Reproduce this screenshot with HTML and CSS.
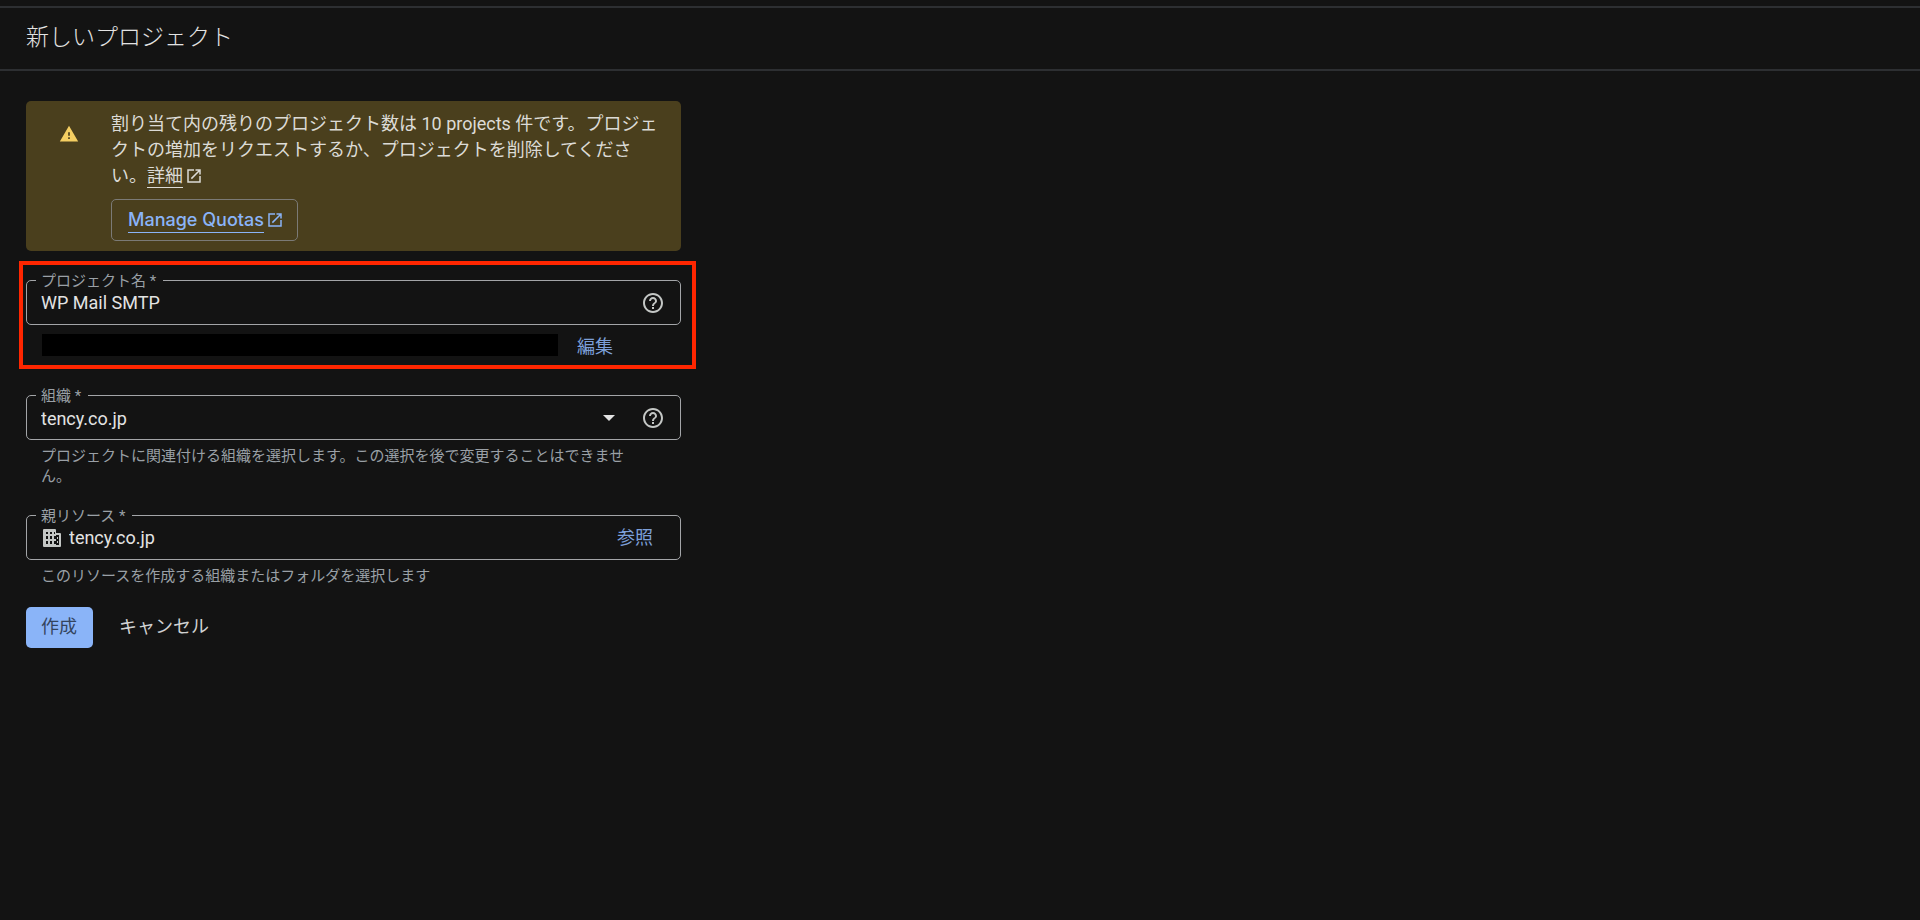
FILE: index.html
```html
<!DOCTYPE html>
<html lang="ja">
<head>
  <meta charset="UTF-8" />
  <meta name="viewport" content="width=device-width, initial-scale=1.0"/>
  <title>新しいプロジェクト</title>
  <link rel="stylesheet" href="styles.css">
</head>
<body>
  <header class="page-header">
    <h1>新しいプロジェクト</h1>
  </header>

  <main class="content">
    <form class="project-form">
      <div class="alert">
        <svg class="alert-icon" viewBox="0 0 24 24"><path d="M1 21h22L12 2 1 21zm12-3h-2v-2h2v2zm0-4h-2v-4h2v4z"/></svg>
        <div class="alert-body">
          <p>割り当て内の残りのプロジェクト数は 10 projects 件です。プロジェクトの増加をリクエストするか、プロジェクトを削除してください。<a class="details-link" href="#">詳細</a><svg class="external-icon" viewBox="0 0 24 24"><path d="M19 19H5V5h7V3H3v18h18v-9h-2v7zM14 3v2h3.600l-9.800 9.800 1.400 1.400L19 6.400V10h2V3h-7z"/></svg></p>
          <a class="quota-button" href="#"><span class="quota-text">Manage Quotas</span><svg class="external-icon" viewBox="0 0 24 24"><path d="M19 19H5V5h7V3H3v18h18v-9h-2v7zM14 3v2h3.600l-9.800 9.800 1.400 1.400L19 6.400V10h2V3h-7z"/></svg></a>
        </div>
      </div>

      <div class="highlight">
        <fieldset class="field">
          <legend><label for="project-name">プロジェクト名 *</label></legend>
          <div class="field-row">
            <input id="project-name" type="text" value="WP Mail SMTP">
            <button class="icon-button" type="button" title="ヘルプ">
              <svg viewBox="0 0 24 24"><path d="M11 18h2v-2h-2v2zm1-16C6.480 2 2 6.480 2 12s4.480 10 10 10 10-4.480 10-10S17.520 2 12 2zm0 18c-4.410 0-8-3.590-8-8s3.590-8 8-8 8 3.590 8 8-3.590 8-8 8zm0-14c-2.210 0-4 1.790-4 4h2c0-1.100.9-2 2-2s2 .9 2 2c0 2-3 1.750-3 5h2c0-2.250 3-2.500 3-5 0-2.210-1.790-4-4-4z"/></svg>
            </button>
          </div>
        </fieldset>
        <div class="project-id">
          <span class="redacted"></span>
          <button class="text-button" type="button">編集</button>
        </div>
      </div>

      <fieldset class="field">
        <legend><label for="organization">組織 *</label></legend>
        <div class="field-row">
          <select id="organization">
            <option>tency.co.jp</option>
          </select>
          <svg class="caret" viewBox="0 0 12 6"><path d="M0 0h12L6 6z"/></svg>
          <button class="icon-button" type="button" title="ヘルプ">
            <svg viewBox="0 0 24 24"><path d="M11 18h2v-2h-2v2zm1-16C6.480 2 2 6.480 2 12s4.480 10 10 10 10-4.480 10-10S17.520 2 12 2zm0 18c-4.410 0-8-3.590-8-8s3.590-8 8-8 8 3.590 8 8-3.590 8-8 8zm0-14c-2.210 0-4 1.790-4 4h2c0-1.100.9-2 2-2s2 .9 2 2c0 2-3 1.750-3 5h2c0-2.250 3-2.500 3-5 0-2.210-1.790-4-4-4z"/></svg>
          </button>
        </div>
      </fieldset>
      <p class="hint">プロジェクトに関連付ける組織を選択します。この選択を後で変更することはできません。</p>

      <fieldset class="field">
        <legend><label for="parent">親リソース *</label></legend>
        <div class="field-row">
          <svg class="org-icon" viewBox="0 0 18 18"><path fill-rule="evenodd" d="M1 0h11q1 0 1 1v3h4q1 0 1 1v12q0 1-1 1H1q-1 0-1-1V1q0-1 1-1zM3 3v2h2V3zM7 3v2h2V3zM3 7v3h2V7zM7 7v3h2V7zM3 12v3h2v-3zM7 12v3h2v-3zM11 3v2h1V3zM11 7v3h2v2h-2v3h2v1h3V6h-3v1zM14 8h1v2h-1zM14 12h1v2h-1z"/></svg>
          <input id="parent" type="text" value="tency.co.jp">
          <button class="text-button" type="button">参照</button>
        </div>
      </fieldset>
      <p class="hint">このリソースを作成する組織またはフォルダを選択します</p>

      <div class="actions">
        <button class="create-button" type="submit">作成</button>
        <button class="cancel-button" type="button">キャンセル</button>
      </div>
    </form>
  </main>
</body>
</html>
```
FILE: styles.css
```css
* {
  box-sizing: border-box;
}
body {
  margin: 0;
  background: #131313;
  color: #e3e3e3;
  font-family: Roboto, "Noto Sans CJK JP", sans-serif;
  font-size: 18px;
  line-height: 26px;
}
p {
  margin: 0;
}
button,
input,
select {
  margin: 0;
  padding: 0;
  border: none;
  background: none;
  color: inherit;
  font: inherit;
}
button {
  cursor: pointer;
}
svg {
  display: block;
  flex: none;
  fill: currentColor;
}
.page-header {
  margin-top: 6px;
  padding: 17px 26px 18px;
  border-top: 2px solid #2d2f32;
  border-bottom: 2px solid #2d2f32;
}
.page-header h1 {
  margin: 0;
  font-size: 23px;
  font-weight: 300;
  line-height: 26px;
}
.content {
  padding: 30px 26px;
}
.project-form {
  max-width: 655px;
}
.alert {
  display: flex;
  gap: 32px;
  padding: 10px 18px 10px 33px;
  border-radius: 5px;
  background: #4a3f1d;
}
.alert-icon {
  width: 20px;
  height: 20px;
  margin-top: 13px;
  color: #f5cf62;
}
.alert-body {
  color: #dcdbd6;
}
.details-link {
  color: inherit;
  text-decoration: underline;
  text-decoration-thickness: 1px;
  text-underline-offset: 5px;
}
.external-icon {
  display: inline-block;
  width: 18px;
  height: 18px;
  margin-left: 2px;
  vertical-align: -3px;
}
.quota-button {
  display: inline-flex;
  align-items: center;
  height: 42px;
  margin-top: 10px;
  padding: 0 13px 0 16px;
  border: 1px solid #7b7a76;
  border-radius: 5px;
  color: #8ab4f8;
  font-family: Inter, sans-serif;
  font-weight: 500;
  line-height: 24px;
  text-decoration: none;
}
.quota-text {
  border-bottom: 1px solid currentColor;
}
.highlight {
  margin: 10px -15px 15px -7px;
  padding: 4px 11px 5px 3px;
  border: 4px solid #ff2600;
}
.field {
  min-width: 0;
  margin: 0;
  padding: 0 15px 9px 14px;
  border: 1px solid #a3a5a8;
  border-radius: 5px;
}
.field legend {
  margin-left: -5px;
  padding: 2px 7px 0 5px;
  color: #9aa0a6;
  font-size: 15px;
  line-height: 20px;
}
.field-row {
  display: flex;
  align-items: center;
  height: 24px;
}
.field-row input,
.field-row select {
  flex: 1;
  min-width: 0;
  height: 24px;
  appearance: none;
  outline: none;
}
.icon-button {
  width: 24px;
  height: 24px;
  color: #c4c7c5;
}
.caret {
  width: 12px;
  height: 6px;
  margin-right: 26px;
}
.org-icon {
  width: 18px;
  height: 18px;
  margin: 0 8px 0 2px;
  color: #c4c7c5;
}
.text-button {
  color: #7c9fd8;
}
.field .text-button {
  margin-right: 12px;
}
.project-id {
  display: flex;
  gap: 19px;
  height: 26px;
  margin: 9px 16px 0;
}
.redacted {
  width: 516px;
  height: 22px;
  background: #000;
}
.hint {
  margin-bottom: 18px;
  padding: 6px 32px 0 15px;
  color: #9aa0a6;
  font-size: 15px;
  line-height: 20px;
}
.actions {
  display: flex;
  gap: 26px;
  padding-top: 3px;
}
.actions button {
  height: 41px;
  padding-bottom: 2px;
}
.create-button {
  padding: 0 16px 0 15px;
  border-radius: 5px;
  background: #8ab4f8;
  color: #34455f;
}
.cancel-button {
  color: #d0d1d2;
}
```
